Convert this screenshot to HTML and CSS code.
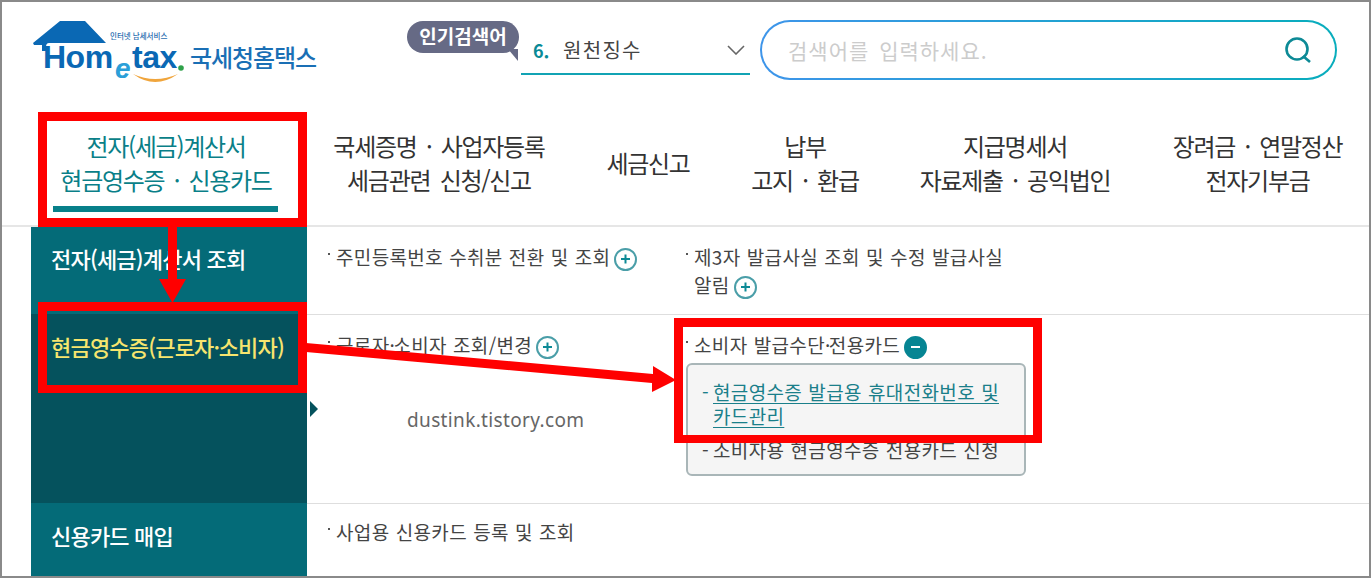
FILE: index.html
```html
<!DOCTYPE html>
<html lang="ko">
<head>
    <meta charset="UTF-8">
    <meta name="viewport" content="width=device-width, initial-scale=1.0">
    <title>국세청홈택스</title>
    <link rel="stylesheet" href="styles.css">
</head>
<body>

<div class="page">
    <header class="top">
        <div class="logo">
            <svg class="logo-art" width="157" height="72" viewBox="0 0 157 72">
                <path d="M0 25 L27 3 L52 3 L73 25 L22 25 L16 25 Q13 25 13 29 L13 33 L9 33 L9 27 L1 27 Z" fill="#0a68b4"/>
                <path d="M100 56 Q122 66 145 56 Q122 72 100 56 Z" fill="#f0a53c"/>
                <circle cx="148" cy="50" r="2.800" fill="#2ea14a"/>
                <text class="logo-word" x="10" y="50">Hom</text>
                <text class="logo-e" x="82" y="60">e</text>
                <text class="logo-word" x="99" y="50">tax</text>
                <text class="logo-sub" x="77" y="21">인터넷 납세서비스</text>
            </svg>
            <span class="logo-name">국세청홈택스</span>
        </div>
        <div class="hot">
            <span class="hot-tag">인기검색어</span>
            <span class="hot-tail"></span>
        </div>
        <div class="rank">
            <b>6.</b>
            <span class="rank-word">원천징수</span>
            <svg class="chev" width="18" height="10" viewBox="0 0 18 10"><path d="M1 1 L9 9 L17 1" fill="none" stroke="#666" stroke-width="1.6"/></svg>
        </div>
        <div class="search">
            <div class="search-in">
                <span class="search-hint">검색어를 입력하세요.</span>
                <svg width="30" height="30" viewBox="0 0 30 30"><circle cx="14" cy="14" r="10.500" fill="none" stroke="#0d8a96" stroke-width="2.600"/><path d="M20 21 L27 27" stroke="#0d8a96" stroke-width="2.600"/></svg>
            </div>
        </div>
    </header>

    <nav class="gnb">
        <a class="gnb-item on"><span>전자(세금)계산서<br>현금영수증 · 신용카드</span></a>
        <a class="gnb-item"><span>국세증명 · 사업자등록<br>세금관련 신청/신고</span></a>
        <a class="gnb-item"><span>세금신고</span></a>
        <a class="gnb-item"><span>납부<br>고지 · 환급</span></a>
        <a class="gnb-item"><span>지급명세서<br>자료제출 · 공익법인</span></a>
        <a class="gnb-item last"><span>장려금 · 연말정산<br>전자기부금</span></a>
    </nav>

    <div class="menu">
        <div class="row row-a">
            <div class="side">전자(세금)계산서 조회</div>
            <div class="col"><p class="link">주민등록번호 수취분 전환 및 조회<i class="plus"></i></p></div>
            <div class="col"><p class="link">제3자 발급사실 조회 및 수정 발급사실<br>알림<i class="plus"></i></p></div>
        </div>
        <div class="row row-b">
            <div class="side side-on">현금영수증(근로자<span class="dot">·</span>소비자)</div>
            <div class="col"><p class="link">근로자<span class="dot">·</span>소비자 조회/변경<i class="plus"></i></p></div>
            <div class="col">
                <p class="link">소비자 발급수단<span class="dot">·</span>전용카드<i class="minus"></i></p>
                <div class="sub">
                    <p class="sub-on">현금영수증 발급용 휴대전화번호 및<br>카드관리</p>
                    <p>소비자용 현금영수증 전용카드 신청</p>
                </div>
            </div>
        </div>
        <div class="row row-c">
            <div class="side side-low">신용카드 매입</div>
            <div class="col"><p class="link">사업용 신용카드 등록 및 조회</p></div>
        </div>
    </div>

    <span class="pointer"></span>
    <span class="watermark">dustink.tistory.com</span>

    <div class="mark mark-nav"></div>
    <div class="mark mark-side"></div>
    <div class="mark mark-sub"></div>
    <svg class="arrows" width="1371" height="578" viewBox="0 0 1371 578">
        <path d="M168 226 H177 V279 H186 L172.500 303 L159 279 H168 Z" fill="#f00"/>
        <path d="M306 343 L653 374 L653 366 L676 380 L652 392 L652 383 L306 352 Z" fill="#f00"/>
    </svg>
</div>

</body>
</html>
```

FILE: styles.css
```css
* {
    box-sizing: border-box;
}
body {
    margin: 0;
    font-family: "Noto Sans CJK KR", "Noto Sans", sans-serif;
    color: #444;
    background: #fff;
}
p {
    margin: 0;
}
.page {
    position: relative;
    width: 1371px;
    height: 578px;
    border: 2px solid #8a8a8a;
    overflow: hidden;
}
.top {
    display: flex;
    height: 108px;
    padding: 16px 0 0 31px;
}
.logo {
    display: flex;
    width: 374px;
    height: 72px;
}
.logo-art {
    flex: none;
}
.logo-word {
    font: bold 32px "Liberation Sans", sans-serif;
    letter-spacing: -.5px;
    fill: #0a68b4;
}
.logo-e {
    font: italic bold 28px "Liberation Sans", sans-serif;
    fill: #2b9fd8;
}
.logo-sub {
    font-size: 7.500px;
    font-weight: 500;
    fill: #2a6db0;
}
.logo-name {
    margin: 24px 0 0 0;
    font-size: 24px;
    line-height: 30px;
    font-weight: 500;
    letter-spacing: -1.100px;
    color: #1a6fb5;
}
.hot {
    position: relative;
    width: 114px;
    height: 34px;
    margin-top: 3px;
}
.hot-tag {
    display: block;
    height: 32px;
    width: 112px;
    border-radius: 16px;
    background: #666a85;
    color: #fff;
    font-size: 19px;
    font-weight: 700;
    line-height: 29px;
    text-align: center;
}
.hot-tail {
    position: absolute;
    right: 3px;
    top: 28px;
    border-top: 12px solid #666a85;
    border-left: 10px solid transparent;
}
.rank {
    display: flex;
    align-items: center;
    width: 229px;
    height: 39px;
    margin-top: 18px;
    padding: 0 5px 10px 12px;
    border-bottom: 2px solid #11a3b4;
    font-size: 20px;
}
.rank b {
    color: #0a8a96;
    font-size: 18px;
    width: 30px;
}
.rank-word {
    flex: 1;
    letter-spacing: 1.300px;
}
.search {
    width: 577px;
    height: 60px;
    margin: 2px 0 0 10px;
    padding: 2px;
    border-radius: 30px;
    background: linear-gradient(90deg, #3e95ea, #08adbc);
}
.search-in {
    display: flex;
    align-items: center;
    justify-content: space-between;
    height: 100%;
    padding: 0 22px 0 26px;
    border-radius: 28px;
    background: #fff;
}
.search-hint {
    color: #ccc;
    font-size: 21px;
    word-spacing: 3px;
    letter-spacing: 1px;
}
.gnb {
    display: grid;
    grid-template-columns: 270px 276px 142px 172px 248px 229px;
    height: 115px;
    margin-left: 29px;
}
.gnb-item {
    display: flex;
    flex-direction: column;
    justify-content: center;
    padding-bottom: 9px;
    text-align: center;
    font-size: 24px;
    line-height: 34px;
    letter-spacing: -1.300px;
    word-spacing: 4px;
    color: #333;
}
.gnb-item.last {
    padding-left: 8px;
}
.gnb-item.on {
    color: #0a7f88;
    position: relative;
}
.gnb-item.on::after {
    content: "";
    position: absolute;
    left: 22px;
    right: 23px;
    bottom: 13px;
    height: 6px;
    background: #07808a;
}
.menu {
    border-top: 2px solid #e6e6e6;
}
.row {
    display: grid;
    grid-template-columns: 29px 276px 358px 1fr;
}
.row-a {
    height: 88px;
}
.row-b {
    height: 189px;
}
.row-c {
    height: 80px;
}
.side {
    grid-column: 2;
    padding: 15px 0 0 20px;
    background: #046b78;
    color: #fff;
    font-size: 22px;
    font-weight: 500;
    line-height: 32px;
    letter-spacing: -.8px;
}
.side-on {
    margin-top: -1px;
    padding-top: 16px;
    background: #05525d;
    color: #f7e56e;
}
.side-low {
    margin-top: -1px;
    padding-top: 16px;
}
.col {
    padding: 16px 0 0 20px;
    border-bottom: 1px solid #dedede;
    font-size: 19px;
    line-height: 28px;
    letter-spacing: .35px;
    word-spacing: .5px;
}
.row-c .col {
    padding-top: 14px;
    border-bottom: 0;
}
.dot {
    letter-spacing: -1.500px;
}
.link {
    padding-left: 9px;
    position: relative;
}
.link::before {
    content: "";
    position: absolute;
    left: 1px;
    top: 10px;
    width: 2px;
    height: 2px;
    background: #555;
}
.plus, .minus {
    display: inline-block;
    position: relative;
    width: 23px;
    height: 23px;
    margin-left: 4px;
    vertical-align: -6px;
    border-radius: 50%;
    border: 2px solid #4a9ea8;
}
.minus {
    background: #068593;
    border-color: #068593;
}
.plus::before, .plus::after, .minus::before {
    content: "";
    position: absolute;
    left: 5px;
    top: 8px;
    width: 9px;
    height: 2px;
    background: #0d8a96;
}
.plus::after {
    transform: rotate(90deg);
}
.minus::before {
    background: #fff;
}
.sub {
    width: 340px;
    height: 113px;
    margin: 4px 0 0 1px;
    padding: 15px 10px 0 25px;
    border: 2px solid #a9b6b8;
    border-radius: 6px;
    background: #f5f5f5;
    line-height: 24px;
}
.sub p {
    position: relative;
}
.sub p::before {
    content: "-";
    position: absolute;
    left: -11px;
    top: 0;
}
.sub-on {
    color: #1a7f8a;
    text-decoration: underline;
    text-underline-offset: 3px;
    margin-bottom: 10px;
}
.pointer {
    position: absolute;
    left: 308px;
    top: 399px;
    border-left: 8px solid #05525d;
    border-top: 8px solid transparent;
    border-bottom: 8px solid transparent;
}
.watermark {
    position: absolute;
    left: 405px;
    top: 403px;
    font: 19px/30px "Noto Sans", sans-serif;
    letter-spacing: .35px;
    color: #666;
}
.mark {
    position: absolute;
    border: 9px solid #f00;
}
.mark-nav {
    left: 36px;
    top: 110px;
    width: 269px;
    height: 115px;
}
.mark-side {
    left: 36px;
    top: 300px;
    width: 269px;
    height: 91px;
    border-width: 9px 9px 8px;
}
.mark-sub {
    left: 672px;
    top: 316px;
    width: 368px;
    height: 125px;
    border-width: 9px 9px 8px;
}
.arrows {
    position: absolute;
    left: -2px;
    top: -2px;
}
```
